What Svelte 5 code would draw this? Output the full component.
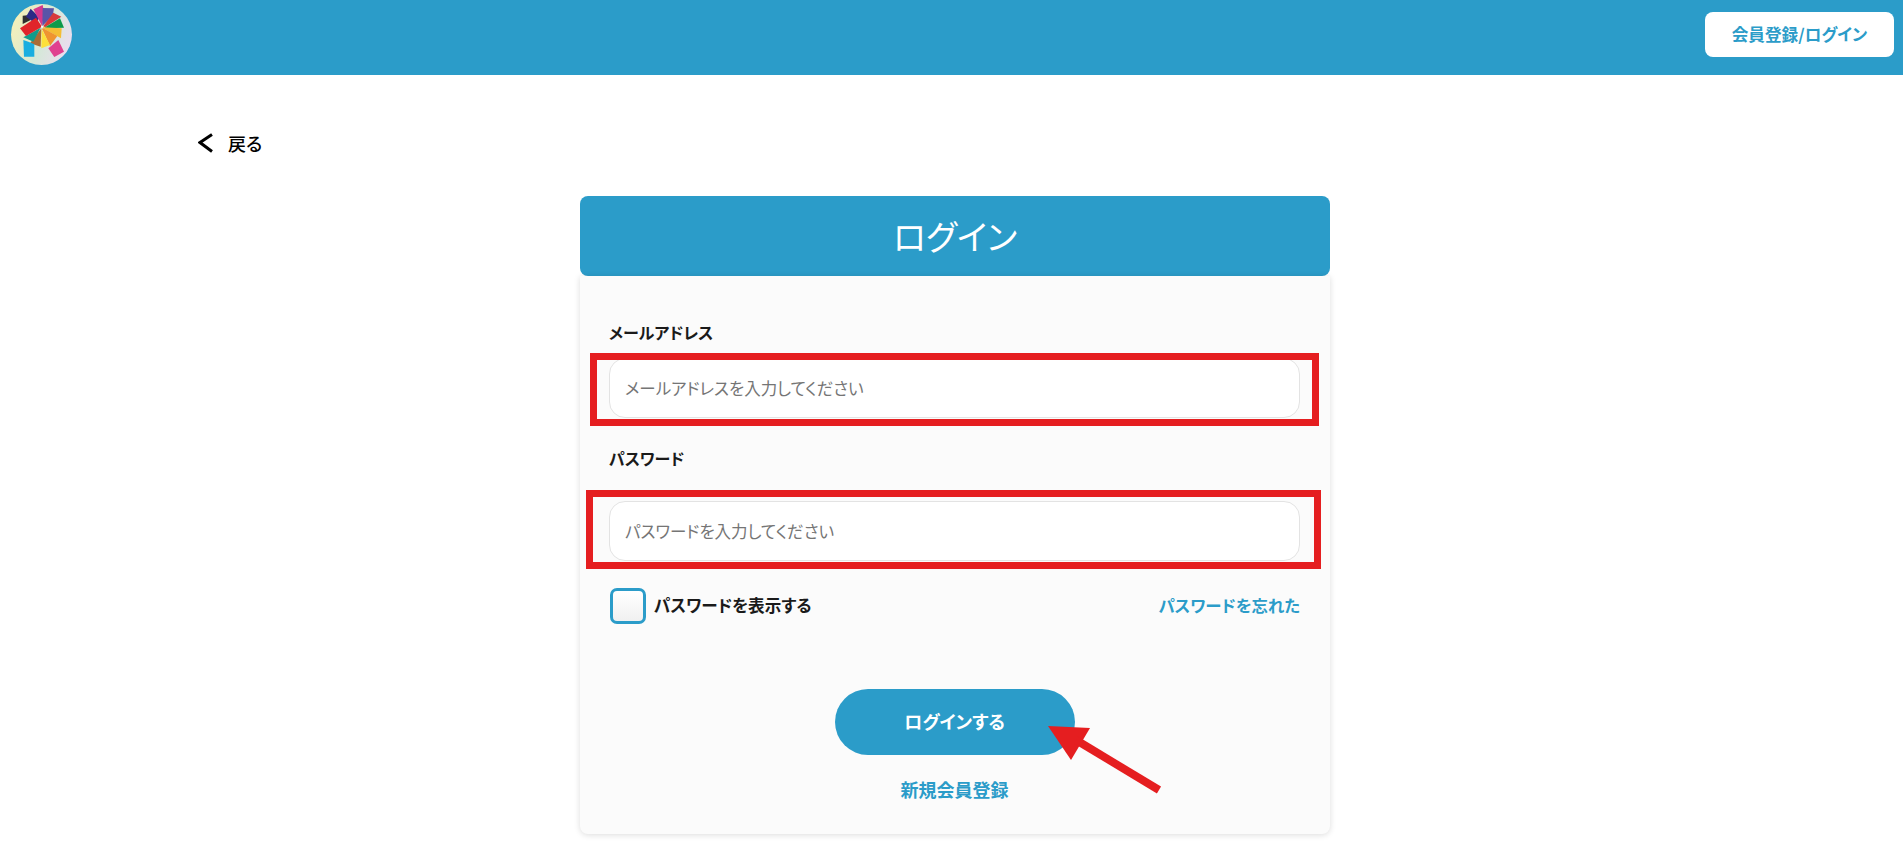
<script>
  let email = $state("");
  let password = $state("");
  let showPassword = $state(false);

  // fan of the logo, in the 3x coordinates it was measured in
  const wedges = [
    { fill: "#2f2f2f", points: "68,47 90,45 92,60 68,72" },
    { fill: "#2b2a86", points: "78,50 92,26 118,52 108,72" },
    { fill: "#d6388d", points: "100,28 128,15 133,40 126,78" },
    { fill: "#5a54a8", points: "128,24 162,25 158,48 127,78" },
    { fill: "#d83a3a", points: "130,78 160,38 184,50 135,82" },
    { fill: "#0d9a4a", points: "135,82 180,55 192,83 137,85" },
    { fill: "#f4bd35", points: "130,82 185,85 183,115 128,84" },
    { fill: "#ef9430", points: "128,84 172,108 150,138 127,88" },
    { fill: "#fde03a", points: "125,87 150,135 124,145" },
    { fill: "#a96c35", points: "124,85 122,140 90,130" },
    { fill: "#119c8c", points: "122,83 100,125 70,112" },
    { fill: "#e0242a", points: "60,85 108,53 126,80 78,108" },
    { fill: "#19aee0", points: "70,120 85,125 103,133 103,170 72,170" },
    { fill: "#e0408f", points: "145,145 175,120 192,155 163,171" }
  ];
</script>

<header class="topbar">
  <svg class="logo" viewBox="30 6 192 198" aria-label="logo">
    <defs>
      <linearGradient id="disc" x1="0" y1="0.3" x2="1" y2="0.7">
        <stop offset="0" stop-color="#f6f0b8" />
        <stop offset="0.55" stop-color="#d5e8d8" />
        <stop offset="1" stop-color="#ecdcf0" />
      </linearGradient>
    </defs>
    <circle cx="124.5" cy="103.5" r="91.5" fill="url(#disc)" />
    {#each wedges as w}
      <polygon points={w.points} fill={w.fill} />
    {/each}
    <circle cx="126" cy="80" r="3" fill="#fff" />
  </svg>
  <button class="member">会員登録/ログイン</button>
</header>

<main class="page">
  <a class="back" href="#top">
    <svg width="15" height="20" viewBox="0 0 15 20">
      <path d="M14 1.500 2 9.500 14 18.500" fill="none" stroke="#000" stroke-width="3" />
    </svg>
    <span>戻る</span>
  </a>

  <section class="card">
    <h1>ログイン</h1>
    <form class="body" onsubmit={(e) => e.preventDefault()}>
      <label class="label first" for="email">メールアドレス</label>
      <input id="email" class="field" type="email" placeholder="メールアドレスを入力してください" bind:value={email} />

      <label class="label second" for="password">パスワード</label>
      <input
        id="password"
        class="field pw"
        type={showPassword ? "text" : "password"}
        placeholder="パスワードを入力してください"
        bind:value={password}
      />

      <div class="options">
        <label class="show">
          <input type="checkbox" bind:checked={showPassword} />
          <span>パスワードを表示する</span>
        </label>
        <a class="link" href="#top">パスワードを忘れた</a>
      </div>

      <div class="actions">
        <button class="submit" type="submit">ログインする</button>
        <a class="link signup" href="#top">新規会員登録</a>
      </div>
    </form>

    <!-- red annotations drawn over the screenshot -->
    <div class="mark mark-email"></div>
    <div class="mark mark-pw"></div>
    <svg class="arrow" width="120" height="75" viewBox="0 0 120 75">
      <polygon points="0,0 42,2 23,34" fill="#e51e20" />
      <line x1="28" y1="14" x2="111" y2="64" stroke="#e51e20" stroke-width="8" />
    </svg>
  </section>
</main>

<style>
  :global(body) {
    background: #fff;
    font-family: "Noto Sans CJK JP", "Noto Sans", sans-serif;
    font-feature-settings: "palt";
    color: #1a1a1a;
  }

  .topbar {
    display: flex;
    justify-content: space-between;
    align-items: flex-start;
    height: 75px;
    padding: 2px 9px 0 10px;
    box-sizing: border-box;
    background: #2b9cc9;
  }

  .logo {
    width: 64px;
    height: 66px;
  }

  .member {
    width: 189px;
    height: 45px;
    margin-top: 10px;
    padding: 0 0 2px;
    border: 0;
    border-radius: 8px;
    background: #fff;
    color: #2b9cc9;
    font: inherit;
    font-size: 16.6px;
    font-weight: 700;
  }

  .page {
    padding: 58px 0 21px 198px;
  }

  .back {
    display: flex;
    align-items: center;
    gap: 15px;
    height: 20px;
    color: #000;
    font-size: 18px;
    font-weight: 500;
    text-decoration: none;
  }

  .card {
    position: relative;
    width: 750px;
    margin: 43px 0 0 382px;
  }

  h1 {
    margin: 0;
    height: 80px;
    border-radius: 8px;
    background: #2b9cc9;
    color: #fff;
    font-size: 34px;
    font-weight: 400;
    line-height: 80px;
    text-align: center;
  }

  .body {
    display: flex;
    flex-direction: column;
    height: 558px;
    padding: 42px 30px 0 29px;
    box-sizing: border-box;
    background: #fbfbfb;
    border-radius: 0 0 8px 8px;
    box-shadow: 0 1px 6px rgba(0, 0, 0, 0.14);
  }

  .label {
    height: 28px;
    font-size: 16px;
    font-weight: 700;
    line-height: 28px;
  }

  .label.second {
    margin-top: 26px;
  }

  .field {
    height: 60px;
    margin-top: 12px;
    padding: 0 15px;
    box-sizing: border-box;
    border: 1px solid #e3e3e3;
    border-radius: 16px;
    background: #fff;
    font: inherit;
    font-size: 16.5px;
    outline: none;
  }

  .field.pw {
    margin-top: 29px;
  }

  .field::placeholder {
    color: #757575;
  }

  .options {
    display: flex;
    justify-content: space-between;
    align-items: center;
    height: 36px;
    margin-top: 27px;
  }

  .show {
    display: flex;
    align-items: center;
    gap: 8px;
    font-size: 16.6px;
    font-weight: 700;
  }

  .show span {
    margin-top: -2px;
  }

  .show input {
    appearance: none;
    width: 36px;
    height: 36px;
    margin: 0 0 0 1px;
    border: 3px solid #2b9cc9;
    border-radius: 7px;
    background: linear-gradient(#fff, #f0f0f0);
  }

  .link {
    margin-top: -2px;
    color: #2b9cc9;
    font-size: 16.4px;
    font-weight: 700;
    text-decoration: none;
  }

  .actions {
    display: flex;
    flex-direction: column;
    align-items: center;
    gap: 23px;
    margin-top: 65px;
  }

  .link.signup {
    font-size: 18px;
  }

  .submit {
    width: 240px;
    height: 66px;
    padding: 0 0 3px;
    border: 0;
    border-radius: 33px;
    background: #2b9cc9;
    color: #fff;
    font: inherit;
    font-size: 18px;
    font-weight: 700;
  }

  .mark {
    position: absolute;
    box-sizing: border-box;
    border: 7px solid #e51e20;
    pointer-events: none;
  }

  .mark-email {
    left: 10px;
    top: 157px;
    width: 729px;
    height: 73px;
  }

  .mark-pw {
    left: 6px;
    top: 294px;
    width: 735px;
    height: 79px;
  }

  .arrow {
    position: absolute;
    left: 468px;
    top: 530px;
    pointer-events: none;
  }
</style>
